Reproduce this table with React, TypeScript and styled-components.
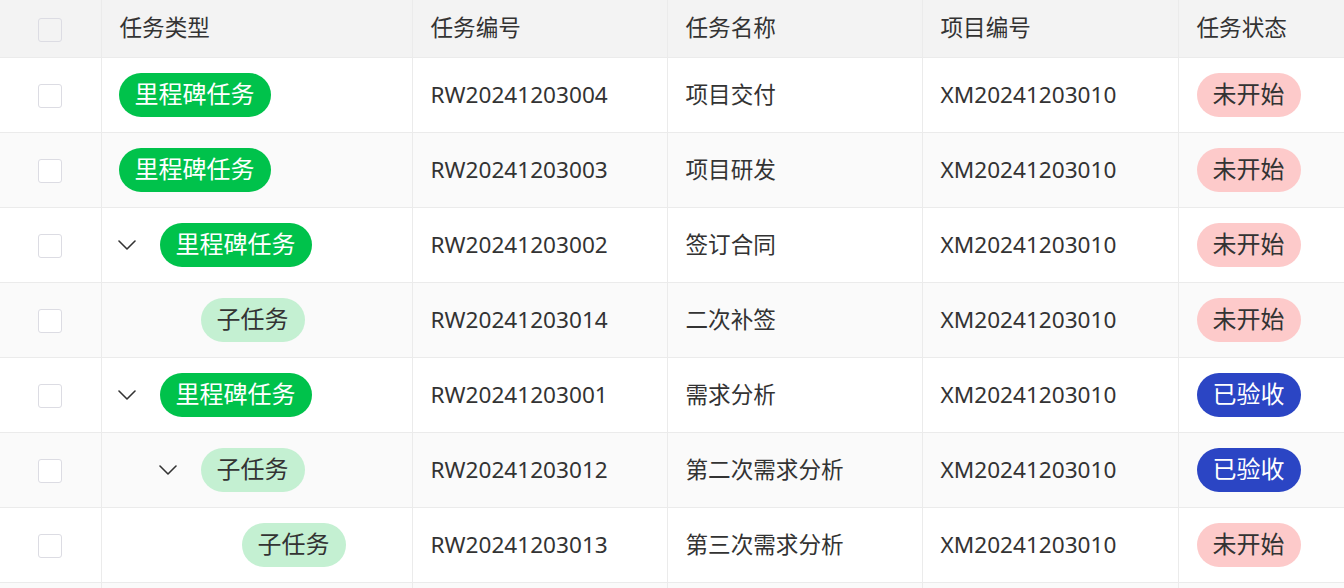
import React from 'react';
import styled, { createGlobalStyle } from 'styled-components';

type Tone = 'milestone' | 'sub' | 'todo' | 'done';

interface TaskRow {
  id: string;
  type: string;
  typeTone: Tone;
  level: number;
  hasChildren: boolean;
  name: string;
  project: string;
  status: string;
  statusTone: Tone;
}

const rows: TaskRow[] = [
  { id: 'RW20241203004', type: '里程碑任务', typeTone: 'milestone', level: 0, hasChildren: false, name: '项目交付', project: 'XM20241203010', status: '未开始', statusTone: 'todo' },
  { id: 'RW20241203003', type: '里程碑任务', typeTone: 'milestone', level: 0, hasChildren: false, name: '项目研发', project: 'XM20241203010', status: '未开始', statusTone: 'todo' },
  { id: 'RW20241203002', type: '里程碑任务', typeTone: 'milestone', level: 0, hasChildren: true, name: '签订合同', project: 'XM20241203010', status: '未开始', statusTone: 'todo' },
  { id: 'RW20241203014', type: '子任务', typeTone: 'sub', level: 1, hasChildren: false, name: '二次补签', project: 'XM20241203010', status: '未开始', statusTone: 'todo' },
  { id: 'RW20241203001', type: '里程碑任务', typeTone: 'milestone', level: 0, hasChildren: true, name: '需求分析', project: 'XM20241203010', status: '已验收', statusTone: 'done' },
  { id: 'RW20241203012', type: '子任务', typeTone: 'sub', level: 1, hasChildren: true, name: '第二次需求分析', project: 'XM20241203010', status: '已验收', statusTone: 'done' },
  { id: 'RW20241203013', type: '子任务', typeTone: 'sub', level: 2, hasChildren: false, name: '第三次需求分析', project: 'XM20241203010', status: '未开始', statusTone: 'todo' },
];

const tones: Record<Tone, { bg: string; fg: string }> = {
  milestone: { bg: '#00c24b', fg: '#ffffff' },
  sub: { bg: '#c4f0d2', fg: '#333333' },
  todo: { bg: '#fdcaca', fg: '#333333' },
  done: { bg: '#2b45c4', fg: '#ffffff' },
};

const Chevron = () => (
  <svg width="18" height="10" viewBox="0 0 18 10" fill="none">
    <path d="M1 1l8 8 8-8" stroke="#333" strokeWidth="1.6" strokeLinecap="round" strokeLinejoin="round" />
  </svg>
);

const App: React.FC = () => {
  return (
    <>
      <GlobalStyle />
      <Table>
        <colgroup>
          <col style={{ width: 101 }} />
          <col style={{ width: 311 }} />
          <col style={{ width: 255 }} />
          <col style={{ width: 255 }} />
          <col style={{ width: 256 }} />
          <col />
        </colgroup>
        <thead>
          <tr>
            <HeadCell $center>
              <Checkbox $header />
            </HeadCell>
            <HeadCell>任务类型</HeadCell>
            <HeadCell>任务编号</HeadCell>
            <HeadCell>任务名称</HeadCell>
            <HeadCell>项目编号</HeadCell>
            <HeadCell>任务状态</HeadCell>
          </tr>
        </thead>
        <tbody>
          {rows.map((r, i) => (
            <BodyRow key={r.id} $striped={i % 2 === 1}>
              <Cell $center>
                <Checkbox />
              </Cell>
              <Cell>
                <TypeWrap>
                  {r.level > 0 && <Indent style={{ width: r.level * 41 }} />}
                  {r.hasChildren ? (
                    <Expander>
                      <Chevron />
                    </Expander>
                  ) : (
                    r.level > 0 && <Expander />
                  )}
                  <Tag $tone={r.typeTone}>{r.type}</Tag>
                </TypeWrap>
              </Cell>
              <Cell>{r.id}</Cell>
              <Cell>{r.name}</Cell>
              <Cell>{r.project}</Cell>
              <Cell>
                <TypeWrap>
                  <Tag $tone={r.statusTone}>{r.status}</Tag>
                </TypeWrap>
              </Cell>
            </BodyRow>
          ))}
          <BodyRow $striped>
            <Cell />
            <Cell />
            <Cell />
            <Cell />
            <Cell />
            <Cell />
          </BodyRow>
        </tbody>
      </Table>
    </>
  );
};

export default App;

const GlobalStyle = createGlobalStyle`
  html, body {
    margin: 0;
    padding: 0;
    background: #ffffff;
    overflow: hidden;
  }
  body {
    font-family: "Noto Sans", "Noto Sans CJK SC", sans-serif;
    color: #333333;
  }
`;

const Table = styled.table`
  width: 1344px;
  table-layout: fixed;
  border-collapse: collapse;
  font-size: 22.6px;
  line-height: 1.2;
`;

const HeadCell = styled.th<{ $center?: boolean }>`
  height: 56px;
  padding: 0 18px 1px;
  background: #f3f3f3;
  font-weight: 400;
  text-align: ${(p) => (p.$center ? 'center' : 'left')};
  border-bottom: 1px solid #ebebeb;
  border-right: 1px solid #ebebeb;
  vertical-align: middle;

  &:last-child {
    border-right: none;
  }
`;

const BodyRow = styled.tr<{ $striped: boolean }>`
  background: ${(p) => (p.$striped ? '#fafafa' : '#ffffff')};
`;

const Cell = styled.td<{ $center?: boolean }>`
  height: 73px;
  padding: 0 18px 1px 18px;
  text-align: ${(p) => (p.$center ? 'center' : 'left')};
  border-bottom: 1px solid #ebebeb;
  border-right: 1px solid #ebebeb;
  vertical-align: middle;
  white-space: nowrap;

  &:nth-child(2) {
    padding-left: 17px;
  }

  &:last-child {
    border-right: none;
  }
`;

const Checkbox = styled.span<{ $header?: boolean }>`
  display: inline-block;
  width: 22px;
  height: 22px;
  border: 1px solid #dcdce3;
  border-radius: 3px;
  background: ${(p) => (p.$header ? 'transparent' : '#ffffff')};
  vertical-align: middle;
`;

const TypeWrap = styled.div`
  display: flex;
  align-items: center;
  padding-top: 1px;
`;

const Indent = styled.span`
  display: inline-block;
  flex-shrink: 0;
`;

const Expander = styled.span`
  display: inline-flex;
  align-items: center;
  width: 41px;
  height: 20px;
  flex-shrink: 0;
  margin-left: -1px;
  margin-right: 1px;
`;

const Tag = styled.span<{ $tone: Tone }>`
  display: inline-flex;
  align-items: center;
  height: 44px;
  padding: 0 16px 1px;
  box-sizing: border-box;
  border-radius: 22px;
  font-size: 24px;
  background: ${(p) => tones[p.$tone].bg};
  color: ${(p) => tones[p.$tone].fg};
`;
